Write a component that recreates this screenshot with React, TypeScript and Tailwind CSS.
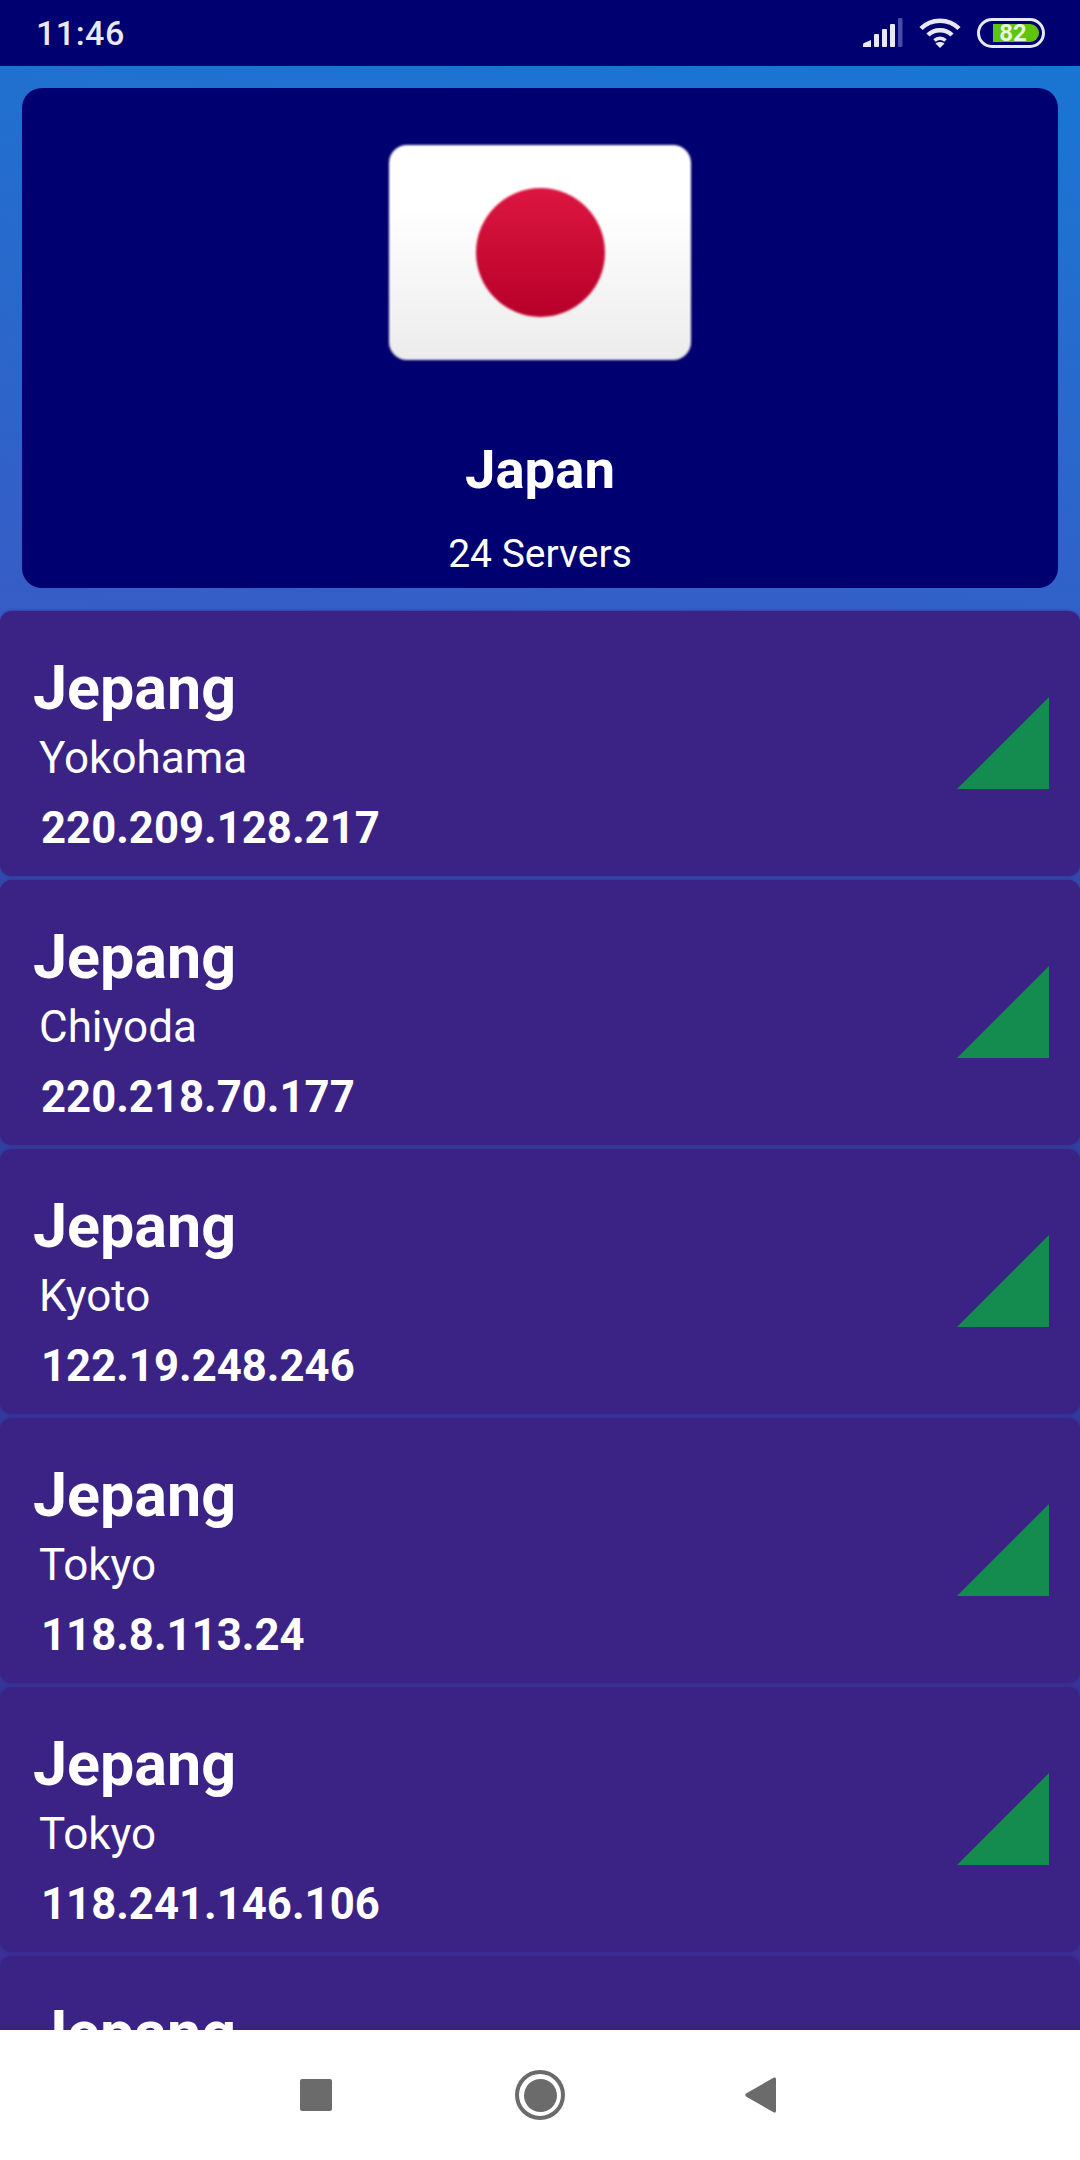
const SERVERS = [
  { city: 'Yokohama', ip: '220.209.128.217' },
  { city: 'Chiyoda', ip: '220.218.70.177' },
  { city: 'Kyoto', ip: '122.19.248.246' },
  { city: 'Tokyo', ip: '118.8.113.24' },
  { city: 'Tokyo', ip: '118.241.146.106' },
  { city: 'Tokyo', ip: '118.8.113.25' },
];

function StatusIcons() {
  return (
    <div className="flex items-center">
      {/* signal */}
      <svg width="40" height="30" viewBox="0 0 40 30" className="mr-[16px]">
        <path d="M0 29 L0 26.5 Q0 25.5 1 25 L8 22 L8 29 Z" fill="#e8e8f8" />
        <rect x="11" y="16" width="5" height="13" rx="1" fill="#e8e8f8" />
        <rect x="19" y="11" width="5" height="18" rx="1" fill="#e8e8f8" />
        <rect x="27" y="6" width="5" height="23" rx="1" fill="#e8e8f8" />
        <rect x="35" y="0" width="4.5" height="29" rx="1" fill="#4a4aa8" />
      </svg>
      {/* wifi */}
      <svg width="42" height="30" viewBox="0 0 42 30" fill="none" stroke="#e8e8f8" strokeWidth="4.5" className="mr-[16px]">
        <path d="M2 10.5 C12 0 30 0 40 10.5" />
        <path d="M9 17 C15 10.5 27 10.5 33 17" />
        <path d="M15.5 22.5 C18.5 19.5 23.5 19.5 26.5 22.5" strokeWidth="3.5" />
        <path d="M21 30 L16.5 25.5 C19 23.5 23 23.5 25.5 25.5 Z" fill="#e8e8f8" stroke="none" />
      </svg>
      {/* battery */}
      <div className="w-[68px] h-[30px] rounded-full border-[3px] border-[#e8e8f8] flex items-center pl-[13px] pr-[3px]">
        <div className="flex-1 h-[18px] bg-[#5ec40c] rounded-r-full flex items-center justify-center pr-[6px]">
          <span className="text-[24px] leading-[18px] font-bold text-[#e8f6dc]">82</span>
        </div>
      </div>
    </div>
  );
}

function Flag() {
  return (
    <div className="w-[302px] h-[215px] rounded-[18px] bg-gradient-to-b from-white from-30% to-[#ececec] flex items-center justify-center blur-[1px]">
      <div className="w-[129px] h-[129px] rounded-full bg-gradient-to-b from-[#dc1640] to-[#b80028]" />
    </div>
  );
}

function ServerRow({ city, ip }: { city: string; ip: string }) {
  return (
    <div className="h-[265px] shrink-0 rounded-[12px] bg-[#3a2385] shadow-[0_0_3px_#3a2385] flex justify-between text-white">
      <div className="pt-[42px]">
        <p className="pl-[33px] text-[61px] leading-[70px] font-bold">Jepang</p>
        <p className="pl-[39px] mt-[10px] text-[44px] leading-[50px] font-normal">{city}</p>
        <p className="pl-[41px] mt-[20px] text-[43.7px] leading-[50px] font-bold">{ip}</p>
      </div>
      <svg width="92" height="92" viewBox="0 0 92 92" className="mt-[86px] mr-[31px]">
        <path d="M92 0 L92 92 L0 92 Z" fill="#148c50" />
      </svg>
    </div>
  );
}

export default function App() {
  return (
    <div className="h-[2160px] flex flex-col overflow-hidden font-['Roboto',sans-serif]">

      {/* status bar */}
      <div className="h-[66px] shrink-0 bg-[#000070] flex items-center justify-between pl-[36px] pr-[35px] text-[#e8e8f8]">
        <span className="text-[34px] font-medium leading-none tracking-[0.5px]">11:46</span>
        <StatusIcons />
      </div>

      {/* content */}
      <div className="flex-1 min-h-0 overflow-hidden">
        <div className="pt-[22px] px-[22px] pb-[23px] bg-[linear-gradient(188deg,#1976d2_0%,#375cc6_100%)]">
          <div className="h-[500px] rounded-[20px] bg-[#000070] flex flex-col items-center pt-[57px] text-white">
            <Flag />
            <p className="mt-[79px] text-[54.5px] leading-[60px] font-bold">Japan</p>
            <p className="mt-[32px] text-[39px] leading-[46px]">24 Servers</p>
          </div>
        </div>
        <div className="h-[1419px] flex flex-col gap-[4px] bg-[linear-gradient(180deg,#375cc6_0%,#2f45a4_25%,#34389c_60%,#3b2f96_100%)]">
          {SERVERS.map((s) => (
            <ServerRow key={s.ip} city={s.city} ip={s.ip} />
          ))}
        </div>
      </div>

      {/* nav bar */}
      <div className="h-[130px] shrink-0 bg-white flex items-start justify-center pt-[40px] pr-[4px]">
        <div className="flex items-center h-[50px]">
          <div className="w-[32px] h-[32px] rounded-[2px] bg-[#6b6b6b]" />
          <div className="ml-[183px] w-[50px] h-[50px] rounded-full border-[4px] border-[#6b6b6b] flex items-center justify-center">
            <div className="w-[33px] h-[33px] rounded-full bg-[#6b6b6b]" />
          </div>
          <svg width="31" height="36" viewBox="0 0 31 36" className="ml-[180px]">
            <path d="M29 0.5 Q31 0 31 2 L31 34 Q31 36 29 35.5 L1 19.5 Q-0.5 18 1 16.5 Z" fill="#6b6b6b" />
          </svg>
        </div>
      </div>
    </div>
  );
}
